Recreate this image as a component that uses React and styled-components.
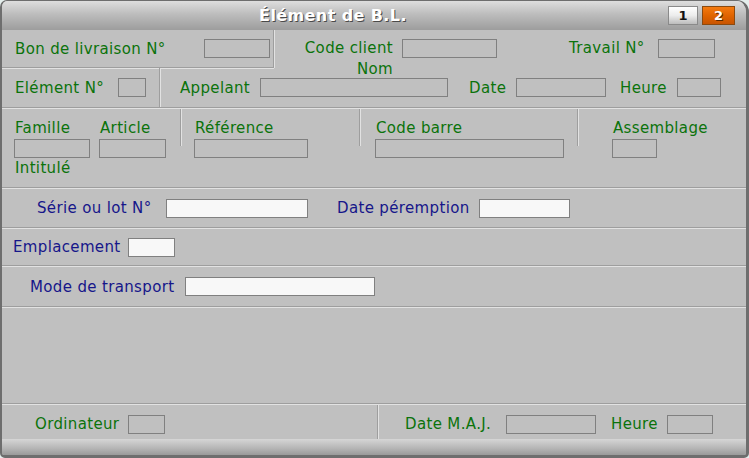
import React from 'react';
import styled, { createGlobalStyle } from 'styled-components';

const GlobalStyle = createGlobalStyle`
	html, body {
		margin: 0;
		padding: 0;
		background: #e4eeec;
	}
	body {
		font-family: 'DejaVu Sans', Verdana, sans-serif;
		font-size: 15px;
		letter-spacing: 0.35px;
	}
`;

const Window = styled.div`
	box-sizing: border-box;
	width: 749px;
	height: 458px;
	display: flex;
	flex-direction: column;
	background: #c0c0c0;
	border-style: solid;
	border-color: #6e6e6e;
	border-width: 1px 3px 3px 2px;
	border-radius: 7px 12px 5px 5px;
	overflow: hidden;
`;

const TitleBar = styled.div`
	height: 29px;
	flex-shrink: 0;
	display: flex;
	align-items: center;
	padding-right: 11px;
	background: linear-gradient(#dedede, #bdbdbd 45%, #9d9d9d);
`;

const Title = styled.div`
	flex: 1;
	text-align: center;
	color: #ffffff;
	font-size: 16px;
	font-weight: bold;
	letter-spacing: 0.4px;
	text-shadow: 1px 1px 0 #4a4a4a;
	padding-right: 4px;
`;

const PageButtons = styled.div`
	display: flex;
	gap: 4px;
`;

const PageBtn = styled.div`
	box-sizing: border-box;
	width: ${(p) => (p.$active ? 33 : 30)}px;
	height: 19px;
	display: flex;
	align-items: center;
	justify-content: center;
	font-size: 13px;
	font-weight: bold;
	letter-spacing: 0;
	border: 1px solid ${(p) => (p.$active ? '#8a4a10' : '#8a8a8a')};
	color: ${(p) => (p.$active ? '#ffffff' : '#111111')};
	text-shadow: ${(p) => (p.$active ? '1px 1px 0 #5a2a00' : 'none')};
	background: ${(p) =>
		p.$active
			? 'linear-gradient(#f47a10, #e06400 50%, #c85400)'
			: 'linear-gradient(#ffffff, #ececec 50%, #bcbcbc)'};
`;

const Row = styled.div`
	box-sizing: border-box;
	height: ${(p) => p.$h}px;
	flex-shrink: 0;
	display: flex;
	align-items: ${(p) => p.$align || 'center'};
	padding-left: ${(p) => p.$pl || 0}px;
	border-bottom: ${(p) => (p.$line ? '1px solid #9e9e9e' : 'none')};
	box-shadow: ${(p) => (p.$line ? '0 1px 0 #e2e2e2' : 'none')};
	margin-bottom: ${(p) => (p.$line ? 1 : 0)}px;
`;

const Cell = styled.div`
	box-sizing: border-box;
	height: 100%;
	width: ${(p) => (p.$w ? `${p.$w}px` : 'auto')};
	flex: ${(p) => (p.$w ? '0 0 auto' : '1')};
	display: flex;
	align-items: ${(p) => p.$align || 'center'};
	padding-left: ${(p) => p.$pl || 0}px;
	padding-top: ${(p) => p.$pt || 0}px;
	border-right: ${(p) => (p.$sep ? '1px solid #9e9e9e' : 'none')};
	border-bottom: ${(p) => (p.$line ? '1px solid #9e9e9e' : 'none')};
	box-shadow: ${(p) =>
		[p.$sep && '1px 0 0 #e2e2e2', p.$line && '0 1px 0 #e2e2e2']
			.filter(Boolean)
			.join(', ') || 'none'};
`;

const Label = styled.span`
	box-sizing: border-box;
	display: inline-block;
	flex-shrink: 0;
	width: ${(p) => (p.$w ? `${p.$w}px` : 'auto')};
	margin-left: ${(p) => p.$ml || 0}px;
	margin-top: ${(p) => p.$mt || 0}px;
	text-align: ${(p) => (p.$right ? 'right' : 'left')};
	line-height: 16px;
	white-space: nowrap;
	color: ${(p) => (p.$blue ? '#16168a' : '#0b730b')};
`;

const Field = styled.div`
	box-sizing: border-box;
	flex-shrink: 0;
	width: ${(p) => p.$w}px;
	height: 19px;
	margin-left: ${(p) => p.$ml || 0}px;
	border: 1px solid #808080;
	background: ${(p) => (p.$white ? '#f8f8f8' : '#c0c0c0')};
`;

const LabelStack = styled.div`
	display: flex;
	flex-direction: column;
	align-items: flex-end;
	align-self: flex-start;
	gap: 5px;
	width: ${(p) => p.$w}px;
	flex-shrink: 0;
	padding-top: 1px;
`;

const FieldCol = styled.div`
	display: flex;
	flex-direction: column;
	align-items: flex-start;
	gap: 3px;
	margin-left: ${(p) => p.$ml || 0}px;
	padding-top: 11px;

	& > span {
		padding-left: 1px;
	}
`;

const Group = styled.div`
	display: flex;
	flex-direction: column;
	margin-left: ${(p) => p.$ml || 0}px;
`;

const GroupRow = styled.div`
	display: flex;
`;

const VSep = styled.div`
	flex-shrink: 0;
	width: 1px;
	height: 37px;
	margin-left: ${(p) => p.$ml || 0}px;
	background: #9e9e9e;
	box-shadow: 1px 0 0 #e2e2e2;
`;

const Spacer = styled.div`
	flex: 1;
	border-bottom: 1px solid #9e9e9e;
	box-shadow: 0 1px 0 #e2e2e2;
	margin-bottom: 1px;
`;

const BottomBar = styled.div`
	flex-shrink: 0;
	height: 16px;
	background: linear-gradient(#d6d6d6, #b4b4b4 60%, #9a9a9a);
`;

const App = () => {
	return (
		<>
			<GlobalStyle />
			<Window>
				<TitleBar>
					<Title>Élément de B.L.</Title>
					<PageButtons>
						<PageBtn>1</PageBtn>
						<PageBtn $active>2</PageBtn>
					</PageButtons>
				</TitleBar>

				<Row $h={38}>
					<Cell $w={272} $pl={13} $sep $line>
						<Label $w={189}>Bon de livraison N°</Label>
						<Field $w={66} />
					</Cell>
					<Cell $pl={31} $align='flex-start' $pt={9}>
						<LabelStack $w={88}>
							<Label>Code client</Label>
							<Label>Nom</Label>
						</LabelStack>
						<Field $w={95} $ml={9} />
						<Label $w={89} $ml={72} $mt={1}>
							Travail N°
						</Label>
						<Field $w={57} />
					</Cell>
				</Row>

				<Row $h={40} $line>
					<Cell $w={158} $pl={13} $sep>
						<Label $w={103}>Elément N°</Label>
						<Field $w={28} />
					</Cell>
					<Cell $pl={20}>
						<Label $w={80}>Appelant</Label>
						<Field $w={188} />
						<Label $w={47} $ml={21}>
							Date
						</Label>
						<Field $w={90} />
						<Label $w={57} $ml={14}>
							Heure
						</Label>
						<Field $w={44} />
					</Cell>
				</Row>

				<Row $h={79} $line $align='flex-start' $pl={12}>
					<Group>
						<GroupRow>
							<FieldCol>
								<Label>Famille</Label>
								<Field $w={76} />
							</FieldCol>
							<FieldCol $ml={9}>
								<Label>Article</Label>
								<Field $w={67} />
							</FieldCol>
						</GroupRow>
						<Label $mt={2} style={{ paddingLeft: 1 }}>
							Intitulé
						</Label>
					</Group>
					<VSep $ml={14} />
					<FieldCol $ml={13}>
						<Label>Référence</Label>
						<Field $w={114} />
					</FieldCol>
					<VSep $ml={51} />
					<FieldCol $ml={15}>
						<Label>Code barre</Label>
						<Field $w={189} />
					</FieldCol>
					<VSep $ml={13} />
					<FieldCol $ml={34}>
						<Label>Assemblage</Label>
						<Field $w={45} />
					</FieldCol>
				</Row>

				<Row $h={39} $line $pl={35}>
					<Label $w={129} $blue>
						Série ou lot N°
					</Label>
					<Field $w={142} $white />
					<Label $w={142} $ml={29} $blue>
						Date péremption
					</Label>
					<Field $w={91} $white />
				</Row>

				<Row $h={37} $line $pl={11}>
					<Label $w={115} $blue>
						Emplacement
					</Label>
					<Field $w={47} $white />
				</Row>

				<Row $h={40} $line $pl={28}>
					<Label $w={155} $blue>
						Mode de transport
					</Label>
					<Field $w={190} $white />
				</Row>

				<Spacer />

				<Row $h={34}>
					<Cell $w={376} $pl={33} $sep $align='flex-start' $pt={10}>
						<Label $w={93} $mt={1}>
							Ordinateur
						</Label>
						<Field $w={37} />
					</Cell>
					<Cell $pl={27} $align='flex-start' $pt={10}>
						<Label $w={101} $mt={1}>
							Date M.A.J.
						</Label>
						<Field $w={90} />
						<Label $w={56} $ml={15} $mt={1}>
							Heure
						</Label>
						<Field $w={46} />
					</Cell>
				</Row>

				<BottomBar />
			</Window>
		</>
	);
};

export default App;
